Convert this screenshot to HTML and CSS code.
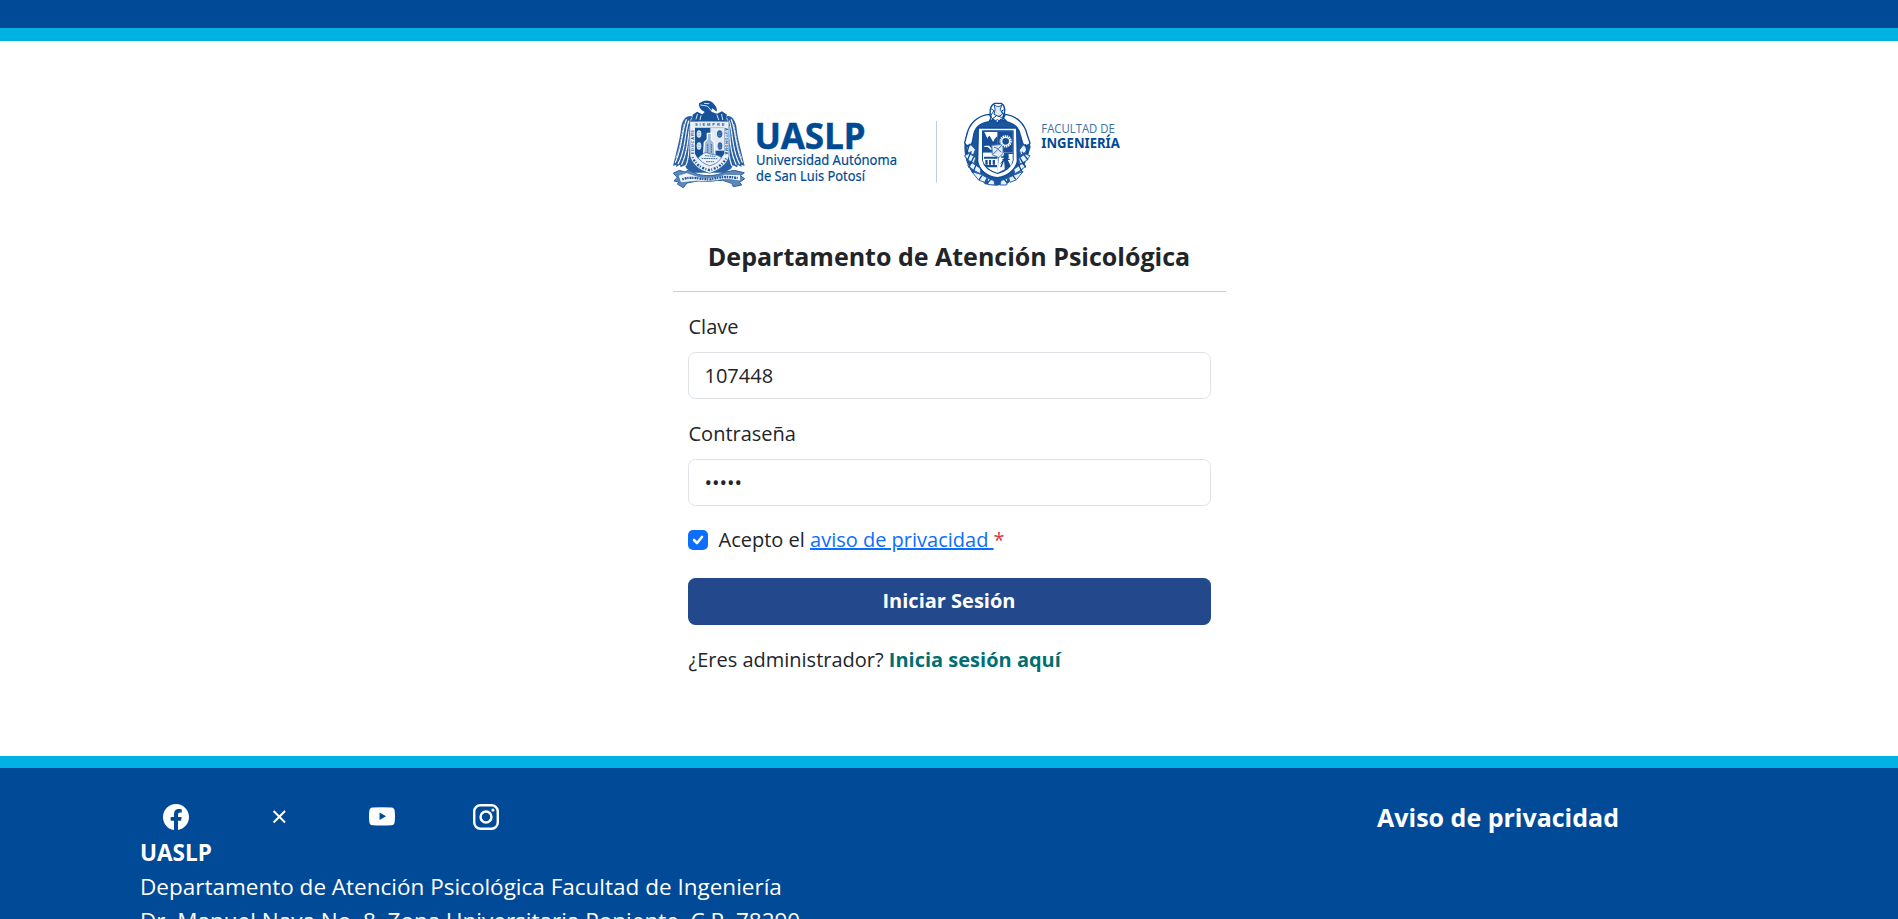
FILE: index.html
```html
<!DOCTYPE html>
<html lang="es">
<head>
<meta charset="utf-8">
<title>Departamento de Atención Psicológica</title>
<link rel="stylesheet" href="styles.css">
</head>
<body>
<header class="topbar"></header>
<main class="main">
  <section class="card">
    <svg class="logos" viewBox="673 95 553 100" role="img" aria-label="UASLP, Facultad de Ingeniería">
      <!-- University crest -->
      <g transform="translate(665 95.700) scale(.33333)" stroke-linejoin="round" stroke-linecap="round">
        <path fill="#2a60a2" d="M86 64C68 55 54 68 49 92C46 120 41 142 35 165C31 182 27 198 24 211L34 207L33 214L45 207L47 215L59 209L65 219L82 231H178L198 219L204 209L216 215L218 207L230 214L229 207L239 211C236 198 232 182 228 165C222 142 217 120 214 92C209 68 195 55 180 64L165 80H102Z"/>
        <path fill="none" stroke="#fff" stroke-width="3.500" stroke-dasharray="12 3" d="M64 72C50 110 52 155 30 202M71 76C59 115 62 160 39 205M75 92C67 130 69 165 49 208M75 120C72 155 72 190 62 210M199 72C213 110 211 155 233 202M193 76C204 115 201 160 224 205M192 92C196 130 194 165 214 208M192 120C191 155 191 190 201 210"/>
        <path fill="none" stroke="#dfe9f4" stroke-width="2.500" stroke-dasharray="5 4" d="M57 86C49 118 47 155 33 186M206 86C214 118 216 155 230 186M80 67L72 84M185 67L192 84"/>
        <path fill="#17519a" d="M90 76L82 58L96 48L112 56L119 49C106 43 101 34 102 23L114 17C123 12 138 14 146 24C151 29 158 38 155 48L149 43L141 38L139 48L156 54L171 47L186 57L178 76Z"/>
        <path fill="none" stroke="#fff" stroke-width="2.500" d="M107 28L127 31L139 45M118 23L132 24M97 56L93 70M108 60L105 72M156 58L161 72M170 56L173 72"/>
        <path fill="#e9f0f8" stroke="#2a60a2" stroke-width="2" d="M75 77H192V182C186 208 158 225 134 233C105 225 81 207 75 182Z"/>
        <path fill="#165198" d="M90 96H178V174C165 194 149 202 134 207C111 199 96 189 90 174Z"/>
        <path fill="#e3ecf5" d="M136 97H177V165H136Z"/>
        <g fill="#e3ecf5"><ellipse cx="102" cy="115" rx="7" ry="11"/><ellipse cx="102" cy="151" rx="7" ry="11"/></g>
        <g fill="#2a60a2"><ellipse cx="164" cy="115" rx="8" ry="11"/><ellipse cx="165" cy="151" rx="7" ry="11"/></g>
        <path fill="none" stroke="#6f95c2" stroke-width="2" d="M99 111H105M99 118H105M99 148H105M99 155H105M160 112H168M160 119H168M161 148H168M161 155H168"/>
        <path fill="#9dbadb" stroke="#fff" stroke-width="4" d="M127 113H140L139 131L147 139L150 177H116L118 140L127 131Z"/>
        <path fill="#eef4fa" stroke="#1f579b" stroke-width="2" d="M99 186C111 178 116 168 128 172L140 176C154 176 162 181 170 186C157 203 145 207 134 210C117 205 106 196 99 186Z"/>
        <path fill="none" stroke="#346aa6" stroke-width="3" stroke-dasharray="3 4" d="M111 188L157 189M121 180L150 182M124 198H146M128 147V170M139 146V170"/>
        <path fill="none" stroke="#23599b" stroke-width="7" stroke-dasharray="3 5 6 4" stroke-linecap="butt" d="M83 184C91 207 110 218 134 223C158 217 176 205 185 184"/>
        <path fill="#5d88b8" stroke="#2a60a2" stroke-width="3" d="M26 232L43 224L60 229L70 223L96 235C121 242 151 242 177 230L208 224L238 231L226 240L239 249L224 260L230 268L205 273L200 263L173 254C151 253 125 260 101 255L66 262L55 276L37 265L42 259L27 256L36 246Z"/>
        <path fill="#eff5fb" stroke="#3b6fab" stroke-width="2" d="M40 239L65 231L97 242C121 248 151 248 181 236L226 237L227 256L191 251C157 251 131 262 97 256L48 261Z"/>
        <path fill="none" stroke="#1b5499" stroke-width="7" stroke-dasharray="4 3 6 2" stroke-linecap="butt" d="M52 251C82 240 107 252 137 251C166 243 190 242 218 247"/>
        <g class="motto" fill="#1e5699"><text x="90" y="92" textLength="88">SIEMPRE</text><text transform="translate(87 176) rotate(-90)" textLength="74">EDUCARE</text><text transform="translate(181 97) rotate(90)" textLength="80">AUTONOMA</text></g>
      </g>
      <g class="wordmark">
        <text class="uaslp" x="754.500" y="148.500" textLength="111" lengthAdjust="spacingAndGlyphs">UASLP</text>
        <text class="university" x="756" y="165" textLength="141" lengthAdjust="spacingAndGlyphs">Universidad Autónoma</text>
        <text class="university" x="756" y="181" textLength="109" lengthAdjust="spacingAndGlyphs">de San Luis Potosí</text>
        <text class="faculty" x="1041.300" y="133" textLength="73.500" lengthAdjust="spacingAndGlyphs">FACULTAD DE</text>
        <text class="engineering" x="1041.300" y="147.500" textLength="78.500" lengthAdjust="spacingAndGlyphs">INGENIERÍA</text>
      </g>
      <path stroke="#bdcde3" stroke-width="1" d="M936.500 121V182.500"/>
      <!-- Faculty crest -->
      <g transform="translate(955 95.300) scale(.33333)" stroke="#0c4c9a" stroke-linejoin="round" stroke-linecap="round">
        <path fill="#1c559e" stroke="none" d="M101 60L76 65C53 76 42 98 34 116L28 153C28 184 36 210 50 230L73 247L90 267L125 271L159 264L184 242L203 222L217 187L227 155L219 125C214 99 200 76 177 65L157 58Z"/>
        <path fill="#fff" stroke-width="4" d="M103 57C66 61 42 85 35 120L29 142C31 154 47 154 52 141L56 119C60 97 75 83 102 79L111 72ZM151 57C184 61 210 85 217 120L225 143C222 153 205 154 202 141L196 119C191 98 181 86 154 79L144 72Z"/>
        <path fill="#fff" stroke-width="4" d="M109 66C101 48 106 30 119 24H139C151 31 153 51 143 66L154 78L138 72L127 83L115 72L103 78Z"/>
        <path fill="#dfe9f4" stroke-width="3" d="M119 29C127 36 133 35 140 29L136 43L143 56L132 64L117 57L120 45Z"/>
        <path fill="none" stroke-width="3" d="M107 40L117 46L109 58M149 42L140 47L147 58M112 70L124 62M143 70L132 62M116 80L127 73L138 80"/>
        <g fill="#e9f1f9" stroke="#2d63a4" stroke-width="3">
          <path d="M35 157L48 148L61 163L55 179L39 170ZM29 181L43 174L62 188L57 204L42 196ZM39 210L52 203L78 220L75 235L58 226ZM216 157L205 149L193 164L198 179L211 171ZM224 181L210 176L191 190L195 206L213 197ZM212 212L201 205L176 222L180 235L195 226Z"/>
          <path d="M51 229L77 237L96 247L89 261L72 255ZM203 229L178 239L161 247L165 261L183 254ZM98 249L117 256L119 269L100 268ZM157 249L138 256L135 269L154 269Z"/>
        </g>
        <path fill="none" stroke-width="4" d="M43 147L35 174M48 169L38 193M55 187L42 216M63 209L54 231M211 148L218 174M202 171L218 193M196 190L211 215M191 209L201 230M80 242L73 252M174 241L181 251M108 251L98 262M147 251L156 262"/>
        <path fill="#fff" stroke-width="4" d="M70 98H185L187 198C182 226 151 245 127 247C97 244 72 225 68 198Z"/>
        <path fill="#fff" stroke-width="4" d="M83 107H174V194C170 216 146 230 128 234C106 228 87 218 83 194Z"/>
        <path fill="#164f98" stroke="none" d="M84 108H128V172H84ZM128 172H173V194C169 214 145 229 128 233Z"/>
        <path fill="#fff" stroke="none" d="M88 110H127V122L118 132L120 155L108 164L98 155H86L102 140ZM128 172H84V197C91 214 108 227 128 232Z"/>
        <path fill="#164f98" stroke="none" d="M128 108H173V172H128Z"/>
        <path fill="#164f98" stroke="none" d="M88 148C99 138 93 126 104 121L114 139L127 125V165H115L102 151H86ZM87 184H127V190H87ZM91 194H98V208H91ZM102 194H108V208H102ZM113 194H120V208H113ZM89 209H126V216H94Z"/>
        <circle cx="152" cy="138" r="15" fill="none" stroke="#fff" stroke-width="7" stroke-dasharray="4 2" stroke-linecap="butt"/>
        <circle cx="152" cy="138" r="12" fill="none" stroke="#fff" stroke-width="4"/>
        <path fill="#fff" stroke="none" d="M132 172H148L144 184L148 187L135 207L148 198L149 222L128 232ZM161 176H173V195L168 213L159 197Z"/>
        <path fill="#e3ebf5" stroke="#477bb7" stroke-width="3" d="M111 150L138 148L144 155V174L132 187L113 179Z"/>
        <path fill="none" stroke="#3c72af" stroke-width="3" d="M115 176L129 162L138 170M118 156L130 160L138 153"/>
        <path fill="none" stroke-width="4" d="M151 177V205M140 185H160M144 192H163M144 199L138 214M157 196L163 213"/>
      </g>
    </svg>
    <h1 class="title">Departamento de Atención Psicológica</h1>
    <form class="form">
      <label class="label" for="clave">Clave</label>
      <input class="input" id="clave" type="text" value="107448">
      <label class="label label-next" for="pass">Contraseña</label>
      <input class="input" id="pass" type="password" value="12345">
      <div class="consent">
        <svg class="check" viewBox="0 0 20 20" aria-hidden="true"><rect width="20" height="20" rx="5" fill="#0d6efd"/><path d="M6 10l3 3 5-6" fill="none" stroke="#fff" stroke-width="2.600" stroke-linecap="round" stroke-linejoin="round"/></svg>
        <span>Acepto el <a class="privacy" href="#">aviso de privacidad&nbsp;</a><span class="required">*</span></span>
      </div>
      <button class="submit" type="button">Iniciar Sesión</button>
      <p class="admin">¿Eres administrador? <a class="admin-link" href="#">Inicia sesión aquí</a></p>
    </form>
  </section>
</main>
<footer class="footer">
  <div class="footer-info">
    <div class="social">
      <svg class="icon" viewBox="0 0 16 16"><path fill="currentColor" d="M16 8.049c0-4.446-3.582-8.050-8-8.050C3.580 0-.002 3.603-.002 8.050c0 4.017 2.926 7.347 6.750 7.951v-5.625h-2.030V8.050H6.750V6.275c0-2.017 1.195-3.131 3.022-3.131.876 0 1.791.157 1.791.157v1.980h-1.009c-.993 0-1.303.621-1.303 1.258v1.510h2.218l-.354 2.326H9.250V16c3.824-.604 6.750-3.934 6.750-7.951"/></svg>
      <svg class="icon" viewBox="0 0 25 25"><path fill="none" stroke="currentColor" stroke-width="1.900" d="M7.300 6.800L18.300 17.800M18.300 6.800L7.300 17.800"/></svg>
      <svg class="icon" viewBox="0 0 16 16"><path fill="currentColor" fill-rule="evenodd" d="M2.200 2.200Q8 1.700 13.800 2.200Q15.600 2.400 15.800 4.200Q16.200 7.600 15.800 11Q15.600 12.900 13.800 13.100Q8 13.500 2.200 13.100Q.4 12.900.2 11Q-.2 7.600.2 4.200Q.4 2.400 2.200 2.200ZM6.500 5.300V9.900L10.500 7.600Z"/></svg>
      <svg class="icon" viewBox="0 0 16 16"><g fill="none" stroke="currentColor" stroke-width="1.500"><rect x=".75" y=".75" width="14.500" height="14.500" rx="3.800"/><circle cx="8" cy="8" r="3.350"/></g><circle cx="12.270" cy="3.730" r=".98" fill="currentColor"/></svg>
    </div>
    <strong class="org">UASLP</strong>
    <span>Departamento de Atención Psicológica Facultad de Ingeniería</span>
    <span>Dr. Manuel Nava No. 8, Zona Universitaria Poniente, C.P. 78290</span>
  </div>
  <a class="footer-link" href="#">Aviso de privacidad</a>
</footer>
</body>
</html>
```
FILE: styles.css
```css
* { box-sizing: border-box; }
html, body { height: 100%; }
body {
  margin: 0;
  display: flex;
  flex-direction: column;
  overflow: hidden;
  background: #fff;
  color: #212529;
  font: 20px/30px "Open Sans", "Noto Sans", sans-serif;
}
.topbar { flex: none; height: 41px; background: #004a98; border-bottom: 13px solid #00b2e3; }
.main { flex: none; height: 715px; padding-top: 54px; display: flex; justify-content: center; align-items: flex-start; }
.card { width: 553px; display: flex; flex-direction: column; }
.logos { width: 553px; height: 100px; display: block; }
.wordmark { fill: #004a93; font-family: "Noto Sans", "Open Sans", sans-serif; }
.uaslp { font-size: 36px; font-weight: 700; stroke: #004a93; stroke-width: .4px; }
.university { font-size: 15px; font-weight: 400; stroke: #004a93; stroke-width: .2px; }
.faculty { font-size: 13px; font-weight: 400; fill: #3b6fab; font-family: "Open Sans", sans-serif; }
.engineering { font-size: 14px; font-weight: 700; }
.motto { font: 700 12px "Liberation Sans", sans-serif; }
.title {
  margin: 42px 0 0;
  height: 55px;
  border-bottom: 1px solid #c6d0de;
  text-align: center;
  font-size: 25px;
  font-weight: 700;
  line-height: 38px;
}
.form { padding: 20px 15px 0; display: flex; flex-direction: column; }
.label { margin-bottom: 10px; padding-left: 1px; }
.label-next { margin-top: 20px; }
.input {
  width: 523px;
  height: 47px;
  padding: 0 16px 1px;
  border: 1px solid #dee2e6;
  border-radius: 7.5px;
  background: #fff;
  color: #212529;
  font: inherit;
  outline: none;
}
.consent { display: flex; align-items: center; gap: 11px; margin-top: 19px; }
.check { width: 20px; height: 20px; flex: none; }
.privacy { color: #0d6efd; text-decoration: underline; }
.required { color: #dc3545; }
.submit {
  height: 47px;
  margin-top: 23px;
  padding: 0 0 2px;
  border: 0;
  border-radius: 7.5px;
  background: #23488b;
  color: #fff;
  font: inherit;
  font-weight: 700;
}
.admin { margin: 20px 0 0; padding-left: 1px; }
.admin-link { color: #006f71; font-weight: 700; text-decoration: none; }
.footer {
  flex: 1;
  min-height: 163px;
  padding: 36px 279px 0 140px;
  border-top: 12px solid #00b2e3;
  background: #004a98;
  color: #fff;
  display: flex;
  justify-content: space-between;
  align-items: flex-start;
}
.footer-info { display: flex; flex-direction: column; font-size: 22.5px; line-height: 34px; white-space: nowrap; }
.social { display: flex; gap: 77.2px; padding-left: 23px; height: 32px; }
.icon { width: 26px; height: 26px; }
.footer-link { color: #fff; font-size: 25px; line-height: 30px; margin-top: -2px; font-weight: 700; text-decoration: none; }
```
